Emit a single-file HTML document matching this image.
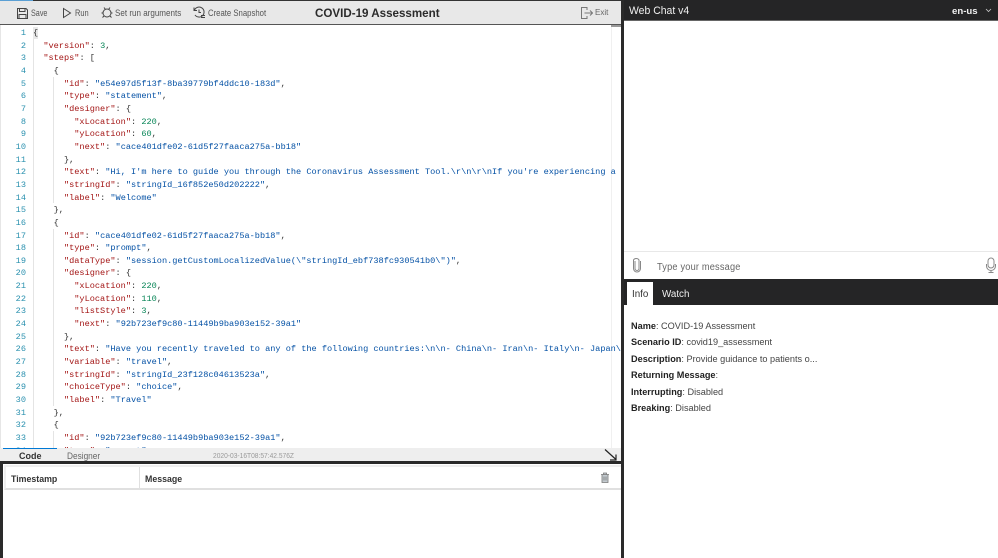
<!DOCTYPE html>
<html>
<head>
<meta charset="utf-8">
<style>
html,body{margin:0;padding:0;background:#fff;}
body{width:998px;height:558px;overflow:hidden;position:relative;font-family:"Liberation Sans",sans-serif;color:#333;}
.a{position:absolute;}
.t{position:absolute;white-space:pre;font-size:8.8px;color:#555;line-height:12px;transform:scaleX(.9);transform-origin:0 0;}
#code{position:absolute;left:33px;top:27px;width:588px;height:421px;overflow:hidden;font-family:"Liberation Mono",monospace;font-size:8.6px;line-height:12.66px;white-space:pre;color:#333;}
#nums{position:absolute;left:0;top:27px;width:26px;height:421px;overflow:hidden;font-family:"Liberation Mono",monospace;font-size:8.6px;line-height:12.66px;text-align:right;color:#2b91af;white-space:pre;}
.k{color:#a31515}.s{color:#0451a5}.n{color:#098658}
.g{position:absolute;width:1px;background:#e4e4e4;}
.inf{position:absolute;left:631px;font-size:9.6px;line-height:12px;color:#444;white-space:pre;transform:scaleX(.955);transform-origin:0 0;}
.inf b{color:#222;}
</style>
</head>
<body>
<div class="a" style="left:0;top:0;width:621px;height:1px;background:#333"></div>
<div class="a" style="left:0;top:0;width:33px;height:1px;background:#5a9fd4"></div>
<div class="a" style="left:0;top:1px;width:621px;height:23px;background:#e8e8e8"></div>
<div class="a" style="left:0;top:24px;width:621px;height:1px;background:#555"></div>

<svg class="a" style="left:17px;top:8px" width="11" height="11" viewBox="0 0 11 11" fill="none" stroke="#444" stroke-width="1"><path d="M.5 .5h8.500l1.500 1.500v8.500H.5z"/><path d="M2.500 .5v3h5.500v-3M2 10.500V6.500h7v4"/></svg>
<div class="t" style="left:31px;top:7px;transform:scaleX(.82)">Save</div>
<svg class="a" style="left:62px;top:7px" width="10" height="12" viewBox="0 0 10 12" fill="none" stroke="#444" stroke-width="1"><path d="M1.500 1.500l7 4.500-7 4.500z"/></svg>
<div class="t" style="left:75px;top:7px;transform:scaleX(.85)">Run</div>
<svg class="a" style="left:101px;top:6px" width="12" height="13" viewBox="0 0 12 13" fill="none" stroke="#444" stroke-width="1"><circle cx="6" cy="7" r="4"/><path d="M3 1.500l1.500 2M9 1.500l-1.500 2M.5 7h1.500M10 7h1.500M1.500 11.500l1.500-1.500M10.500 11.500l-1.500-1.500"/></svg>
<div class="t" style="left:115px;top:7px;transform:scaleX(.915)">Set run arguments</div>
<svg class="a" style="left:193px;top:6px" width="13" height="13" viewBox="0 0 13 13" fill="none" stroke="#444" stroke-width="1"><path d="M1.500 4a5 5 0 1 1 .5 5M1 1.500v3h3M6 3.500v3h2M8 9.500h4M8 11.500h4"/></svg>
<div class="t" style="left:208px;top:7px;transform:scaleX(.88)">Create Snapshot</div>
<div class="a" style="left:315px;top:6px;font-size:11.6px;line-height:15px;font-weight:bold;color:#2b2b2b;white-space:pre">COVID-19 Assessment</div>
<svg class="a" style="left:581px;top:7px" width="12" height="12" viewBox="0 0 12 12" fill="none" stroke="#777" stroke-width="1"><path d="M6 3V.5H.5v11H6V9M3.500 6h8M9 3.500L11.500 6 9 8.500"/></svg>
<div class="t" style="left:595px;top:7px;font-size:8px;transform:none;color:#666">Exit</div>

<div class="a" style="left:0;top:25px;width:1px;height:423px;background:#e6e6e6"></div>
<div class="a" style="left:33px;top:27px;width:5px;height:12px;background:#e8e8e8"></div>
<div class="g" style="left:33px;top:39px;height:409px"></div>
<div class="g" style="left:53px;top:77px;height:126px"></div>
<div class="g" style="left:53px;top:229px;height:177px"></div>
<div class="g" style="left:53px;top:431px;height:17px"></div>
<div class="a" style="left:611px;top:25px;width:1px;height:423px;background:#f0f0f0"></div>
<div id="nums">1
2
3
4
5
6
7
8
9
10
11
12
13
14
15
16
17
18
19
20
21
22
23
24
25
26
27
28
29
30
31
32
33
34</div>
<div id="code">{
  <span class="k">"version"</span>: <span class="n">3</span>,
  <span class="k">"steps"</span>: [
    {
      <span class="k">"id"</span>: <span class="s">"e54e97d5f13f-8ba39779bf4ddc10-183d"</span>,
      <span class="k">"type"</span>: <span class="s">"statement"</span>,
      <span class="k">"designer"</span>: {
        <span class="k">"xLocation"</span>: <span class="n">220</span>,
        <span class="k">"yLocation"</span>: <span class="n">60</span>,
        <span class="k">"next"</span>: <span class="s">"cace401dfe02-61d5f27faaca275a-bb18"</span>
      },
      <span class="k">"text"</span>: <span class="s">"Hi, I'm here to guide you through the Coronavirus Assessment Tool.\r\n\r\nIf you're experiencing a life-threatening</span>
      <span class="k">"stringId"</span>: <span class="s">"stringId_16f852e50d202222"</span>,
      <span class="k">"label"</span>: <span class="s">"Welcome"</span>
    },
    {
      <span class="k">"id"</span>: <span class="s">"cace401dfe02-61d5f27faaca275a-bb18"</span>,
      <span class="k">"type"</span>: <span class="s">"prompt"</span>,
      <span class="k">"dataType"</span>: <span class="s">"session.getCustomLocalizedValue(\"stringId_ebf738fc930541b0\")"</span>,
      <span class="k">"designer"</span>: {
        <span class="k">"xLocation"</span>: <span class="n">220</span>,
        <span class="k">"yLocation"</span>: <span class="n">110</span>,
        <span class="k">"listStyle"</span>: <span class="n">3</span>,
        <span class="k">"next"</span>: <span class="s">"92b723ef9c80-11449b9ba903e152-39a1"</span>
      },
      <span class="k">"text"</span>: <span class="s">"Have you recently traveled to any of the following countries:\n\n- China\n- Iran\n- Italy\n- Japan\n- South Korea"</span>,
      <span class="k">"variable"</span>: <span class="s">"travel"</span>,
      <span class="k">"stringId"</span>: <span class="s">"stringId_23f128c04613523a"</span>,
      <span class="k">"choiceType"</span>: <span class="s">"choice"</span>,
      <span class="k">"label"</span>: <span class="s">"Travel"</span>
    },
    {
      <span class="k">"id"</span>: <span class="s">"92b723ef9c80-11449b9ba903e152-39a1"</span>,
      <span class="k">"type"</span>: <span class="s">"prompt"</span>,</div>
<div class="a" style="left:611px;top:25px;width:10px;height:2px;background:#999"></div>

<div class="a" style="left:0;top:448px;width:621px;height:13px;background:#eeeeee"></div>
<div class="a" style="left:3px;top:448px;width:54px;height:1px;background:#0078d4"></div>
<div class="a" style="left:19px;top:450px;font-size:9px;line-height:12px;font-weight:bold;color:#333">Code</div>
<div class="a" style="left:67px;top:450px;font-size:9px;line-height:12px;color:#666;transform:scaleX(.92);transform-origin:0 0">Designer</div>
<div class="a" style="left:213px;top:450px;font-size:7.4px;line-height:11px;color:#999;white-space:pre;transform:scaleX(.9);transform-origin:0 0">2020-03-16T08:57:42.576Z</div>
<svg class="a" style="left:604px;top:449px" width="13" height="12" viewBox="0 0 13 12" fill="none" stroke="#222" stroke-width="1.2"><path d="M1 .5l11 10M12 5.500v5.500H6"/></svg>
<div class="a" style="left:0;top:461px;width:621px;height:3px;background:#2a2a2a"></div>

<div class="a" style="left:0;top:464px;width:3px;height:94px;background:#2a2a2a"></div>
<div class="a" style="left:4px;top:465px;width:617px;height:25px;box-sizing:border-box;border-top:2px solid #efefef;border-bottom:2px solid #e0e0e0;border-left:2px solid #efefef;background:#fff"></div>
<div class="a" style="left:139px;top:467px;width:1px;height:22px;background:#e0e0e0"></div>
<div class="a" style="left:11px;top:473px;font-size:8.8px;line-height:12px;font-weight:bold;color:#333">Timestamp</div>
<div class="a" style="left:145px;top:473px;font-size:8.8px;line-height:12px;font-weight:bold;color:#333">Message</div>
<svg class="a" style="left:600px;top:472px" width="10" height="11" viewBox="0 0 10 11" fill="#c4cbd0" stroke="#777" stroke-width=".8"><path d="M2 2.500h6v8H2zM1 2.500h8M3.500 2.500V1h3v1.500M4 4.500v4M6 4.500v4"/></svg>

<div class="a" style="left:621px;top:0;width:3px;height:558px;background:#2a2a2a"></div>
<div class="a" style="left:624px;top:0;width:374px;height:20px;background:#252526"></div>
<div class="a" style="left:624px;top:20px;width:374px;height:1px;background:#666"></div>
<div class="a" style="left:629px;top:4px;font-size:11px;line-height:15px;color:#f0f0f0;white-space:pre;transform:scaleX(.95);transform-origin:0 0">Web Chat v4</div>
<div class="a" style="left:952px;top:5px;font-size:9.6px;line-height:13px;font-weight:bold;color:#f0f0f0;white-space:pre">en-us</div>
<svg class="a" style="left:985px;top:8px" width="7" height="5" viewBox="0 0 7 5" fill="none" stroke="#ccc" stroke-width=".8"><path d="M1 1l2.500 2.500L6 1"/></svg>

<div class="a" style="left:624px;top:251px;width:374px;height:1px;background:#e8e8e8"></div>
<svg class="a" style="left:632px;top:257px" width="10" height="16" viewBox="0 0 10 16" fill="none" stroke="#888" stroke-width="1"><path d="M3 4v7.500a2 2 0 0 0 4 0V3a3 2.500 0 0 0-5.500 0v8.500a3.500 3.500 0 0 0 7 0V4"/></svg>
<div class="a" style="left:657px;top:261px;font-size:9.8px;line-height:13px;color:#666;letter-spacing:.2px;white-space:pre;transform:scaleX(.94);transform-origin:0 0">Type your message</div>
<svg class="a" style="left:985px;top:257px" width="12" height="17" viewBox="0 0 12 17" fill="none" stroke="#888" stroke-width="1"><rect x="3" y="1" width="6" height="10" rx="3"/><path d="M1.500 7v2a4.500 4.500 0 0 0 9 0V7M6 13.500v2M3.500 15.500h5"/></svg>

<div class="a" style="left:624px;top:279px;width:374px;height:26px;background:#252526"></div>
<div class="a" style="left:627px;top:282px;width:26px;height:23px;background:#fff"></div>
<div class="a" style="left:632px;top:288px;font-size:9.8px;line-height:13px;color:#333">Info</div>
<div class="a" style="left:662px;top:288px;font-size:9.8px;line-height:13px;color:#f0f0f0">Watch</div>

<div class="inf" style="top:321px"><b>Name</b>: COVID-19 Assessment</div>
<div class="inf" style="top:337px"><b>Scenario ID</b>: covid19_assessment</div>
<div class="inf" style="top:354px"><b>Description</b>: Provide guidance to patients o...</div>
<div class="inf" style="top:370px"><b>Returning Message</b>:</div>
<div class="inf" style="top:387px"><b>Interrupting</b>: Disabled</div>
<div class="inf" style="top:403px"><b>Breaking</b>: Disabled</div>
</body>
</html>
